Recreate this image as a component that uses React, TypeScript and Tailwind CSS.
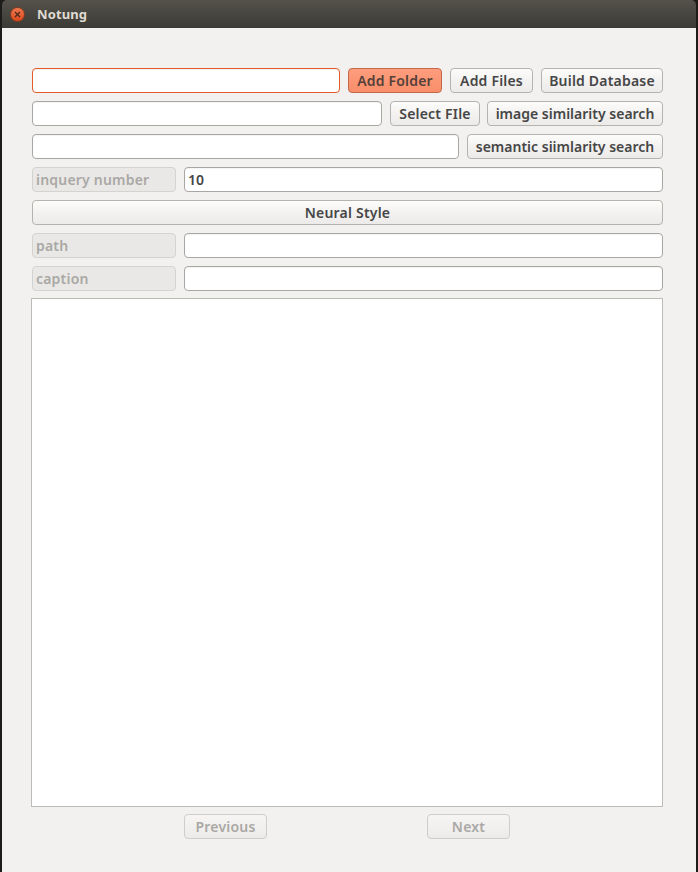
const font = { fontFamily: '"Noto Sans", "Open Sans", sans-serif' };

function Btn({ w, children, active, disabled }: { w: string; children: string; active?: boolean; disabled?: boolean }) {
  return (
    <div className={`${w} h-[25px] shrink-0 rounded-[4px] border flex items-center justify-center text-[14px] font-semibold leading-none ${
      active
        ? 'border-[#c2694a] bg-gradient-to-b from-[#fd9d7d] to-[#f98e6a] text-[#54403a]'
        : disabled
          ? 'border-[#cfcdca] bg-gradient-to-b from-[#f6f5f4] to-[#ecebe9] text-[#aaa8a5]'
          : 'border-[#b6b3af] bg-gradient-to-b from-[#fcfcfb] via-[#f3f2f1] to-[#ecebe9] text-[#464646]'
    }`}>{children}</div>
  );
}

function Input({ w, focus, children }: { w: string; focus?: boolean; children?: string }) {
  return (
    <div className={`${w} h-[25px] rounded-[4px] border bg-white flex items-center px-[3px] text-[14px] font-semibold leading-none text-[#464646] shadow-[inset_0_1px_1px_rgba(0,0,0,0.05)] ${focus ? 'border-[#e35a27]' : 'border-[#a9a7a3]'}`}>
      {children}
    </div>
  );
}

function Label({ children }: { children: string }) {
  return (
    <div className="w-[144px] h-[25px] shrink-0 rounded-[4px] border border-[#d5d3d0] bg-[#e9e8e6] flex items-center px-[3px] text-[14px] tracking-[0.2px] font-semibold leading-none text-[#aaa8a5]">
      {children}
    </div>
  );
}

export default function App() {
  return (
    <div className="w-[698px] h-[872px] bg-[#1c1c1b] px-[2px] flex flex-col overflow-hidden" style={font}>
      <div className="h-[28px] shrink-0 rounded-t-[5px] bg-gradient-to-b from-[#55524b] to-[#3b3a35] flex items-center pl-[8px]">
        <div className="w-[15px] h-[15px] rounded-full bg-gradient-to-b from-[#f0774d] to-[#d9481c] border border-[#8a3a1d] flex items-center justify-center">
          <svg width="7" height="7" viewBox="0 0 7 7"><path d="M1 1 L6 6 M6 1 L1 6" stroke="#4a2a1c" strokeWidth="1.2" /></svg>
        </div>
        <span className="ml-[12px] text-[13px] font-bold tracking-[0.1px] text-[#dfdbd2] leading-none">Notung</span>
      </div>
      <div className="flex-1 bg-[#f2f1f0] pt-[40px] pl-[30px] pr-[33px] flex flex-col gap-[8px]">
        <div className="flex gap-[8px]">
          <Input w="w-[308px]" focus />
          <Btn w="w-[94px] tracking-[0.2px]" active>Add Folder</Btn>
          <Btn w="w-[83px] tracking-[0.2px]">Add Files</Btn>
          <Btn w="w-[122px] tracking-[0.2px]">Build Database</Btn>
        </div>
        <div className="flex gap-[8px]">
          <Input w="w-[350px]" />
          <Btn w="w-[90px] tracking-[0.2px]">Select FIle</Btn>
          <Btn w="w-[176px] -ml-px">image similarity search</Btn>
        </div>
        <div className="flex gap-[8px]">
          <Input w="w-[427px]" />
          <Btn w="w-[196px]">semantic siimlarity search</Btn>
        </div>
        <div className="flex gap-[8px]">
          <Label>inquery number</Label>
          <Input w="flex-1">10</Input>
        </div>
        <Btn w="w-full tracking-[0.2px]">Neural Style</Btn>
        <div className="flex gap-[8px]">
          <Label>path</Label>
          <Input w="flex-1" />
        </div>
        <div className="flex gap-[8px]">
          <Label>caption</Label>
          <Input w="flex-1" />
        </div>
        <div className="h-[509px] -ml-px -mt-px bg-white border border-[#bdbbb8]" />
        <div className="flex gap-[160px] pl-[152px] -mt-[1px]">
          <Btn w="w-[83px] tracking-[0.2px]" disabled>Previous</Btn>
          <Btn w="w-[83px] tracking-[0.2px]" disabled>Next</Btn>
        </div>
      </div>
    </div>
  );
}
